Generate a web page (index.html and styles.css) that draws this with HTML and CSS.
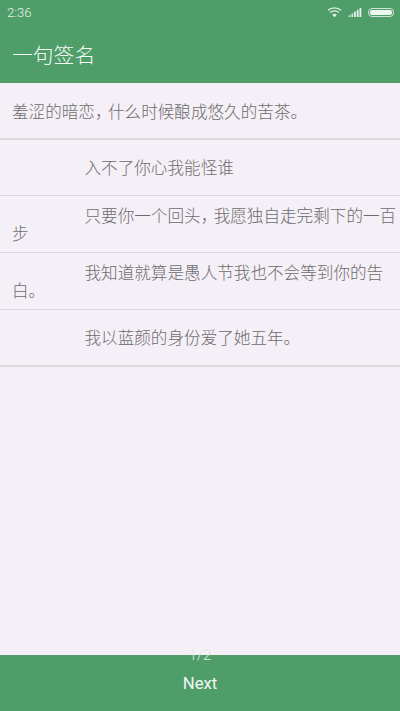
FILE: index.html
```html
<!DOCTYPE html>
<html>
<head>
    <title>一句签名</title>
    <link rel="stylesheet" href="styles.css">
</head>
<body>
    <div class="app">
        <div class="status-bar">
            <span class="time">2:36</span>
            <div class="status-icons">
                <svg class="icon-wifi" width="15" height="12" viewBox="0 0 16 12">
                    <path d="M1 4.2C5 .6 11 .6 15 4.2" fill="none" stroke="#e6f3ea" stroke-width="1.4"/>
                    <path d="M3.4 6.6C6 4.3 10 4.3 12.600 6.600" fill="none" stroke="#e6f3ea" stroke-width="1.4"/>
                    <path d="M5.600 8.800C7 7.700 9 7.700 10.400 8.800L8 11.500z" fill="#e6f3ea"/>
                </svg>
                <svg class="icon-signal" width="14" height="9" viewBox="0 0 14 10">
                    <rect x="0" y="8" width="2" height="2" fill="#cfe4d6"/>
                    <rect x="3" y="6" width="2" height="4" fill="#cfe4d6"/>
                    <rect x="6" y="4" width="2" height="6" fill="#e6f3ea"/>
                    <rect x="9" y="2" width="2" height="8" fill="#e6f3ea"/>
                    <rect x="12" y="0" width="2" height="10" fill="#e6f3ea"/>
                </svg>
                <div class="battery"><div class="battery-level"></div></div>
            </div>
        </div>

        <div class="toolbar">一句签名</div>

        <div class="intro">羞涩的暗恋<span class="comma">，</span>什么时候酿成悠久的苦茶。</div>

        <div class="list">
            <div class="list-item"><p>入不了你心我能怪谁</p></div>
            <div class="list-item"><p>只要你一个回头<span class="comma">，</span>我愿独自走完剩下的一百步</p></div>
            <div class="list-item"><p>我知道就算是愚人节我也不会等到你的告白。</p></div>
            <div class="list-item"><p>我以蓝颜的身份爱了她五年。</p></div>
        </div>

        <div class="spacer"></div>

        <div class="footer">
            <span class="page-num">1/2</span>
            <span class="next">Next</span>
        </div>
    </div>
</body>
</html>
```

FILE: styles.css
```css
:root {
    --green: #4f9e69;
    --page-bg: #f5eff7;
    --text-color: #6c6c6c;
    --line-color: #dcd8de;
}

html, body {
    margin: 0;
    padding: 0;
}

body {
    font-family: "Noto Sans CJK SC", "Roboto", sans-serif;
    font-weight: 300;
    background-color: var(--page-bg);
}

.app {
    display: flex;
    flex-direction: column;
    width: 400px;
    height: 711px;
    overflow: hidden;
}

.status-bar {
    display: flex;
    align-items: center;
    justify-content: space-between;
    height: 24px;
    padding: 0 6px 0 7px;
    background-color: var(--green);
    color: #e6f3ea;
    font-family: "Roboto", sans-serif;
    font-size: 13px;
}

.status-icons {
    display: flex;
    align-items: center;
    gap: 6px;
}

.battery {
    width: 26px;
    height: 9px;
    padding: 1px;
    box-sizing: border-box;
    border: 1px solid #cfe4d6;
    border-radius: 4px;
}

.battery-level {
    height: 100%;
    background-color: #eef6f0;
    border-radius: 2px;
}

.toolbar {
    display: flex;
    align-items: center;
    height: 59px;
    padding-left: 12px;
    background-color: var(--green);
    color: #f4faf6;
    font-size: 20.800px;
}

.intro {
    display: flex;
    align-items: center;
    box-sizing: border-box;
    height: 56.500px;
    padding: 2px 0 0 12px;
    border-bottom: 2px solid var(--line-color);
    color: var(--text-color);
    font-size: 16.600px;
}

/* the comma in the reference is narrower than a full em */
.comma {
    font-feature-settings: "halt";
    letter-spacing: 4.700px;
}

.list-item {
    display: flex;
    align-items: center;
    box-sizing: border-box;
    height: 56.800px;
    padding: 0 0 0 12px;
    border-bottom: 1px solid var(--line-color);
    color: var(--text-color);
    font-size: 16.600px;
    line-height: 18px;
}

.list-item:last-child {
    border-bottom-width: 2px;
}

.list-item p {
    margin: 0;
    text-indent: 72.500px;
}

.spacer {
    flex: 1;
}

.footer {
    position: relative;
    display: flex;
    align-items: center;
    justify-content: center;
    height: 56px;
    background-color: var(--green);
}

.page-num {
    position: absolute;
    top: -9px;
    left: 0;
    right: 0;
    text-align: center;
    color: #dfe9e2;
    font-family: "Roboto", sans-serif;
    font-size: 15px;
}

.next {
    color: #f1f8f3;
    font-family: "Roboto", sans-serif;
    font-weight: 400;
    font-size: 16.700px;
}
```
